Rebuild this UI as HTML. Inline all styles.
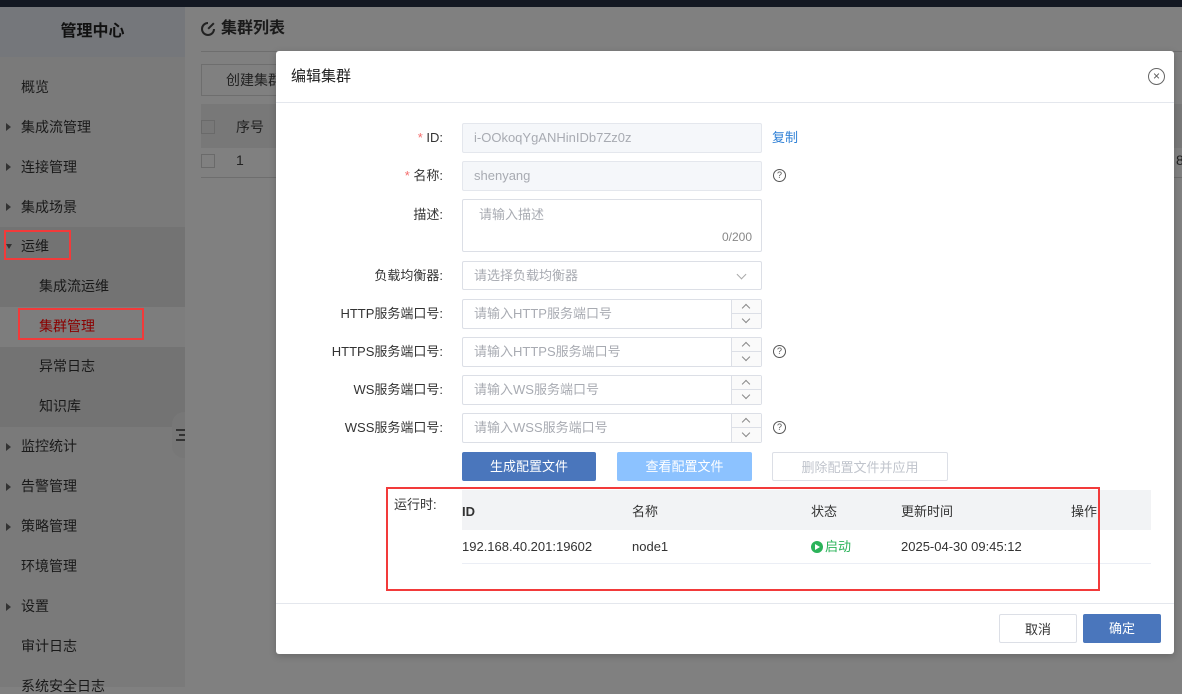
<!DOCTYPE html>
<html style="background:#808080"><head><meta charset="utf-8"><style>
*{box-sizing:border-box;margin:0;padding:0}
body{width:1182px;height:687px;overflow:hidden;position:relative;background:#808080;font-family:"Liberation Sans","Noto Sans CJK SC",sans-serif;font-size:14px;line-height:16px;color:#333}
.abs{position:absolute}
.bg{left:0;top:0;width:1182px;height:687px;background:#808080}
.top{left:0;top:0;width:1182px;height:7px;background:#131822}
.side{left:0;top:7px;width:185px;height:680px;background:#7a7a7a}
.sh{left:0;top:7px;width:185px;height:50px;background:#75777b;text-align:center;line-height:50px;font-size:16px;font-weight:bold;color:#111}
.mi{position:absolute;left:21px;font-size:14px;color:#1a1a1a}
.tri{position:absolute;left:6px;width:0;height:0;border-top:4px solid transparent;border-bottom:4px solid transparent;border-left:5px solid #333}
.inp{position:absolute;left:462px;width:300px;height:30px;border:1px solid #dcdfe6;border-radius:2px;background:#fff;padding-left:11px;line-height:28px;font-size:13px;color:#a8abb2}
.lab{position:absolute;right:739px;font-size:13px;color:#333;text-align:right}
.spin{position:absolute;right:0;top:0;width:30px;height:28px;border-left:1px solid #dcdfe6;background:#fafafa}
.spin:after{content:"";position:absolute;left:0;top:13px;width:29px;border-top:1px solid #dcdfe6}
.spin i,.spin b{position:absolute;left:11px;width:6px;height:6px;border-left:1px solid #888;border-top:1px solid #888}
.spin i{top:5px;transform:rotate(45deg)}
.spin b{top:16px;transform:rotate(225deg)}
.q{position:absolute;left:773px;width:13px;height:13px;border:1px solid #555;border-radius:50%;font-size:9px;line-height:11px;text-align:center;color:#555}
.btn{position:absolute;top:452px;height:29px;line-height:29px;text-align:center;font-size:13px;border-radius:2px}
</style></head><body>
<div class="abs bg"></div>
<div class="abs top"></div>
<div class="abs side"></div>
<div class="abs sh">管理中心</div>
<div class="abs" style="left:0;top:227px;width:185px;height:80px;background:#737373"></div>
<div class="abs" style="left:0;top:307px;width:185px;height:40px;background:#7d7d7d"></div>
<div class="abs" style="left:0;top:347px;width:185px;height:80px;background:#737373"></div>
<div class="mi" style="top:79px">概览</div>
<div class="tri" style="top:123px"></div><div class="mi" style="top:119px">集成流管理</div>
<div class="tri" style="top:163px"></div><div class="mi" style="top:159px">连接管理</div>
<div class="tri" style="top:203px"></div><div class="mi" style="top:199px">集成场景</div>
<div class="abs" style="left:6px;top:244px;border-left:3px solid transparent;border-right:3px solid transparent;border-top:5px solid #333"></div>
<div class="mi" style="top:238px">运维</div>
<div class="abs" style="left:4px;top:230px;width:67px;height:30px;border:2px solid #f23a3a"></div>
<div class="mi" style="left:39px;top:278px">集成流运维</div>
<div class="mi" style="left:39px;top:318px;color:#8b0000">集群管理</div>
<div class="abs" style="left:18px;top:308px;width:126px;height:32px;border:2px solid #f23a3a"></div>
<div class="mi" style="left:39px;top:358px">异常日志</div>
<div class="mi" style="left:39px;top:398px">知识库</div>
<div class="abs" style="left:172px;top:412px;width:13px;height:46px;background:#777;border-radius:12px 0 0 12px"></div>
<div class="abs" style="left:176px;top:429px;width:9px;height:12px;border-top:2px solid #333;border-bottom:2px solid #333"></div>
<div class="abs" style="left:179px;top:434px;width:6px;border-top:2px solid #333"></div>
<div class="tri" style="top:443px"></div><div class="mi" style="top:438px">监控统计</div>
<div class="tri" style="top:483px"></div><div class="mi" style="top:478px">告警管理</div>
<div class="tri" style="top:523px"></div><div class="mi" style="top:518px">策略管理</div>
<div class="mi" style="top:558px">环境管理</div>
<div class="tri" style="top:603px"></div><div class="mi" style="top:598px">设置</div>
<div class="mi" style="top:638px">审计日志</div>
<div class="mi" style="top:678px">系统安全日志</div>
<!-- main -->
<div class="abs" style="left:201px;top:22px;width:14px;height:14px;border:2px solid #222;border-radius:50%"></div>
<div class="abs" style="left:208px;top:21px;width:8px;height:8px;background:#808080"></div>
<div class="abs" style="left:207px;top:25px;width:8px;border-top:2px solid #222;transform:rotate(-45deg)"></div>
<div class="abs" style="left:221px;top:21px;font-size:16px;font-weight:bold;color:#1a1a1a">集群列表</div>
<div class="abs" style="left:201px;top:51px;width:981px;border-top:1px solid #6e6e6e"></div>
<div class="abs" style="left:201px;top:64px;width:90px;height:32px;border:1px solid #6e6e6e;line-height:30px;padding-left:24px;color:#222;font-size:14px">创建集群</div>
<div class="abs" style="left:201px;top:104px;width:981px;height:44px;background:#787878"></div>
<div class="abs" style="left:201px;top:120px;width:14px;height:14px;border:1px solid #6a6a6a"></div>
<div class="abs" style="left:236px;top:119px;color:#222">序号</div>
<div class="abs" style="left:201px;top:154px;width:14px;height:14px;border:1px solid #6a6a6a"></div>
<div class="abs" style="left:236px;top:152px;color:#222">1</div>
<div class="abs" style="left:201px;top:177px;width:981px;border-top:1px solid #6e6e6e"></div>
<div class="abs" style="left:1176px;top:152px;color:#222">8</div>
<!-- modal -->
<div class="abs" style="left:276px;top:51px;width:898px;height:603px;background:#fff;border-radius:3px;box-shadow:0 2px 8px rgba(0,0,0,.2)"></div>
<div class="abs" style="left:291px;top:69px;font-size:15px;color:#222">编辑集群</div>
<div class="abs" style="left:1148px;top:68px;width:17px;height:17px;border:1px solid #666;border-radius:50%;text-align:center;line-height:14px;font-size:12px;color:#555">×</div>
<div class="abs" style="left:276px;top:102px;width:898px;border-top:1px solid #e4e7ed"></div>
<div class="lab" style="top:130px"><span style="color:#f56c6c">* </span>ID:</div>
<div class="inp" style="top:123px;background:#f5f7fa;border-color:#e4e7ed">i-OOkoqYgANHinIDb7Zz0z</div>
<div class="abs" style="left:772px;top:130px;font-size:13px;color:#2f80d6">复制</div>
<div class="lab" style="top:168px"><span style="color:#f56c6c">* </span>名称:</div>
<div class="inp" style="top:161px;background:#f5f7fa;border-color:#e4e7ed">shenyang</div>
<div class="q" style="top:169px">?</div>
<div class="lab" style="top:207px">描述:</div>
<div class="inp" style="top:199px;height:53px;padding-left:16px;line-height:30px">请输入描述<span style="position:absolute;right:9px;top:22px;font-size:12px;color:#888">0/200</span></div>
<div class="lab" style="top:268px">负载均衡器:</div>
<div class="inp" style="top:261px;height:29px">请选择负载均衡器<span style="position:absolute;right:16px;top:9px;width:7px;height:7px;border-right:1px solid #aaa;border-bottom:1px solid #aaa;transform:rotate(45deg)"></span></div>
<div class="lab" style="top:306px">HTTP服务端口号:</div>
<div class="inp" style="top:299px">请输入HTTP服务端口号<div class="spin"><i></i><b></b></div></div>
<div class="lab" style="top:344px">HTTPS服务端口号:</div>
<div class="inp" style="top:337px">请输入HTTPS服务端口号<div class="spin"><i></i><b></b></div></div>
<div class="q" style="top:345px">?</div>
<div class="lab" style="top:382px">WS服务端口号:</div>
<div class="inp" style="top:375px">请输入WS服务端口号<div class="spin"><i></i><b></b></div></div>
<div class="lab" style="top:420px">WSS服务端口号:</div>
<div class="inp" style="top:413px">请输入WSS服务端口号<div class="spin"><i></i><b></b></div></div>
<div class="q" style="top:421px">?</div>
<div class="btn" style="left:462px;width:134px;background:#4a76bc;color:#fff">生成配置文件</div>
<div class="btn" style="left:617px;width:135px;background:#8cc2ff;color:#fff">查看配置文件</div>
<div class="btn" style="left:772px;width:176px;border:1px solid #dcdfe6;color:#c0c4cc">删除配置文件并应用</div>
<div class="abs" style="left:394px;top:497px;font-size:13px">运行时:</div>
<div class="abs" style="left:462px;top:490px;width:689px;height:40px;background:#f2f3f5"></div>
<div class="abs" style="left:462px;top:504px;font-size:13px;font-weight:bold;color:#333">ID</div>
<div class="abs" style="left:632px;top:504px;font-size:13px">名称</div>
<div class="abs" style="left:811px;top:504px;font-size:13px">状态</div>
<div class="abs" style="left:901px;top:504px;font-size:13px">更新时间</div>
<div class="abs" style="left:1071px;top:504px;font-size:13px">操作</div>
<div class="abs" style="left:462px;top:539px;font-size:13px">192.168.40.201:19602</div>
<div class="abs" style="left:632px;top:539px;font-size:13px">node1</div>
<div class="abs" style="left:811px;top:541px;width:12px;height:12px;border-radius:50%;background:#2bb35a"></div>
<div class="abs" style="left:815px;top:544px;border-top:3px solid transparent;border-bottom:3px solid transparent;border-left:5px solid #fff"></div>
<div class="abs" style="left:825px;top:539px;font-size:13px;color:#2bb35a">启动</div>
<div class="abs" style="left:901px;top:539px;font-size:13px">2025-04-30 09:45:12</div>
<div class="abs" style="left:462px;top:563px;width:689px;border-top:1px solid #ebeef5"></div>
<div class="abs" style="left:386px;top:487px;width:714px;height:104px;border:2px solid #f23a3a"></div>
<div class="abs" style="left:276px;top:603px;width:898px;border-top:1px solid #e4e7ed"></div>
<div class="btn" style="left:999px;top:614px;width:78px;border:1px solid #dcdfe6;color:#333">取消</div>
<div class="btn" style="left:1083px;top:614px;width:78px;background:#4a76bc;color:#fff">确定</div>
</body></html>
